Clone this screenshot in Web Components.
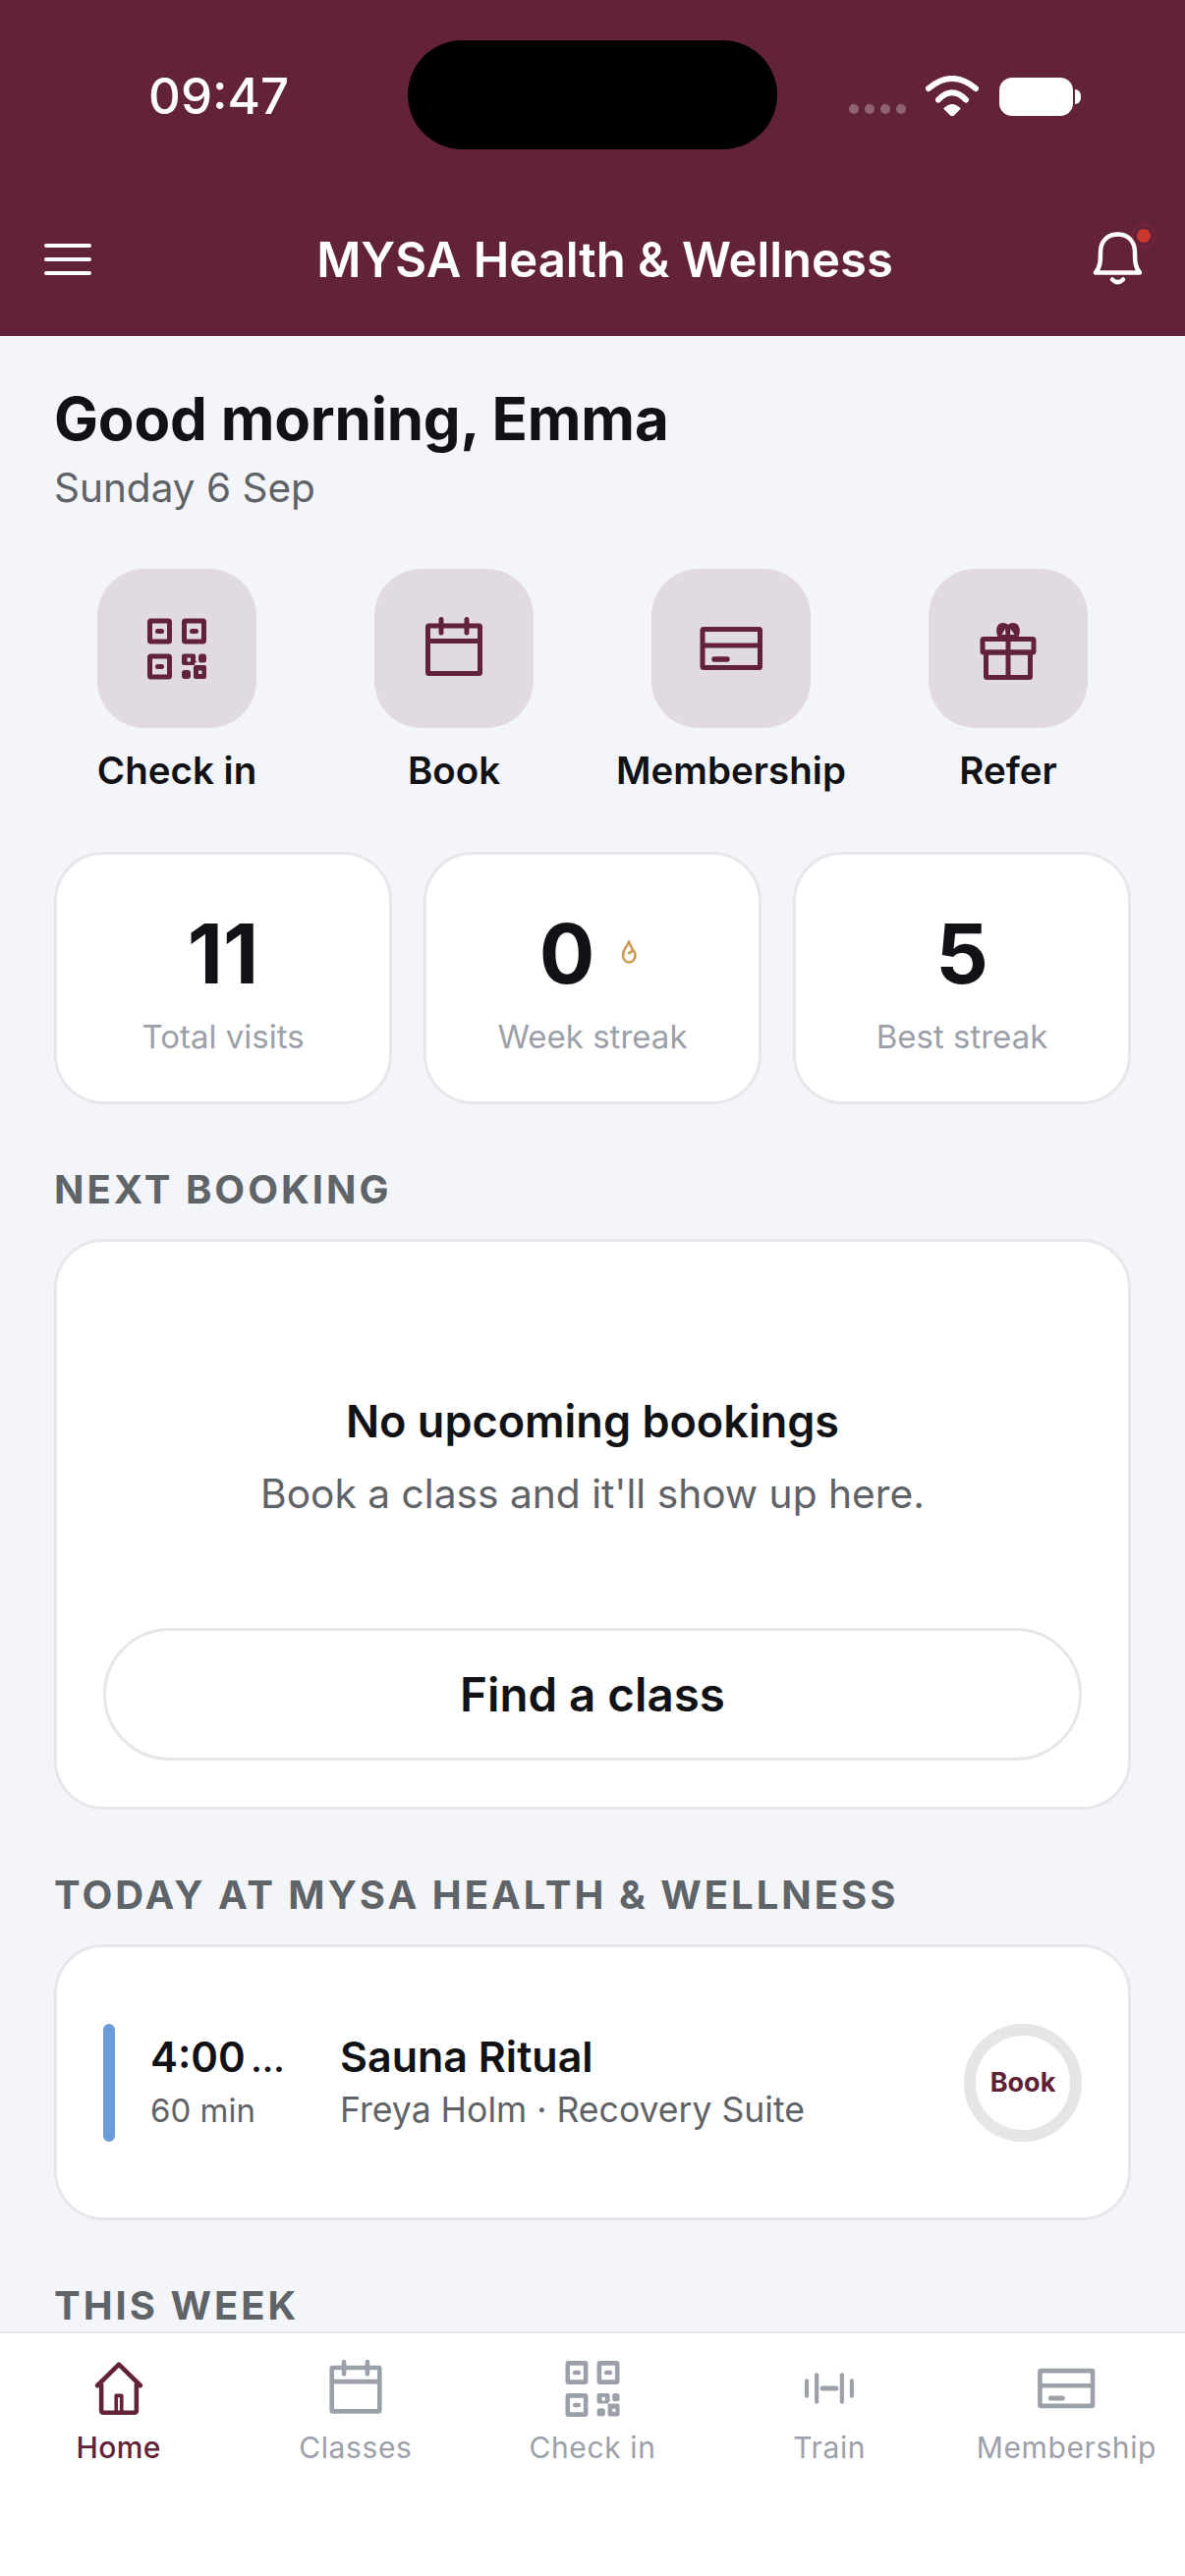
<!DOCTYPE html>
<html lang="en"><head><meta charset="utf-8"><title>MYSA Health & Wellness</title>
<style>
html,body{margin:0;padding:0;background:#F4F5F9}
body{font-family:Inter,"Liberation Sans",sans-serif;color:#111216;-webkit-font-smoothing:antialiased}
</style></head><body>
<mysa-app>
  <mysa-header slot="header" title="MYSA Health &amp; Wellness"></mysa-header>
  <mysa-greeting name="Good morning, Emma" date="Sunday 6 Sep"></mysa-greeting>
  <mysa-actions>
    <mysa-action icon="qr">Check in</mysa-action>
    <mysa-action icon="calendar">Book</mysa-action>
    <mysa-action icon="card">Membership</mysa-action>
    <mysa-action icon="gift">Refer</mysa-action>
  </mysa-actions>
  <mysa-stats>
    <mysa-stat value="11" label="Total visits"></mysa-stat>
    <mysa-stat value="0" label="Week streak" flame></mysa-stat>
    <mysa-stat value="5" label="Best streak"></mysa-stat>
  </mysa-stats>
  <mysa-section>NEXT BOOKING</mysa-section>
  <mysa-empty heading="No upcoming bookings" text="Book a class and it'll show up here." action="Find a class"></mysa-empty>
  <mysa-section>TODAY AT MYSA HEALTH &amp; WELLNESS</mysa-section>
  <mysa-class time="4:00 …" duration="60 min" name="Sauna Ritual" detail="Freya Holm · Recovery Suite" action="Book"></mysa-class>
  <mysa-section>THIS WEEK</mysa-section>
  <mysa-tabs slot="footer">
    <mysa-tab icon="home" active>Home</mysa-tab>
    <mysa-tab icon="calendar">Classes</mysa-tab>
    <mysa-tab icon="qr">Check in</mysa-tab>
    <mysa-tab icon="dumbbell">Train</mysa-tab>
    <mysa-tab icon="card">Membership</mysa-tab>
  </mysa-tabs>
</mysa-app>
<script>
const ICONS={
qr:`<g fill="none" stroke="currentColor" stroke-width="5" stroke-linejoin="round"><rect x="8.5" y="8" width="20" height="21" rx="1"/><rect x="43.5" y="8" width="20" height="21" rx="1"/><rect x="8.5" y="44" width="20" height="21" rx="1"/></g><g fill="currentColor"><rect x="14" y="16" width="9" height="5" rx="2.5"/><rect x="49" y="16" width="9" height="5" rx="2.5"/><rect x="14" y="52" width="9" height="5" rx="2.5"/><path fill-rule="evenodd" d="M43 41.5h10a2 2 0 0 1 2 2V48a2 2 0 0 0 2 2h-1a2 2 0 0 0-2 2v1H43a2 2 0 0 1-2-2V43.5a2 2 0 0 1 2-2zM46.500 45.500v4h3.500v-4z"/><rect x="58" y="41.500" width="8" height="9" rx="3"/><rect x="41" y="58" width="9" height="9" rx="3"/><path fill-rule="evenodd" d="M55 53h9a2 2 0 0 1 2 2v10a2 2 0 0 1-2 2H55a2 2 0 0 1-2-2V55a2 2 0 0 1 2-2zM58 58.500v3.500h3.500v-3.500z"/></g>`,
calendar:`<g fill="none" stroke="currentColor" stroke-width="5" stroke-linecap="round" stroke-linejoin="round"><rect x="9.500" y="13" width="53" height="48.500" rx="1"/><path d="M8 28.500H64" stroke-linecap="butt"/><path d="M23 6.500V20M49 6.500V20"/></g>`,
card:`<g fill="none" stroke="currentColor" stroke-width="5" stroke-linejoin="round"><rect x="7" y="16.500" width="58.500" height="39" rx="1"/><path d="M7 33H65.500"/><path d="M19 47H32" stroke-linecap="round" stroke-width="5.500"/></g>`,
gift:`<g fill="none" stroke="currentColor" stroke-width="5" stroke-linejoin="round"><rect x="10" y="26.500" width="52" height="13.500" rx="1"/><rect x="13.500" y="40" width="45" height="25.500" rx="1"/><path d="M36 26.500V65.500"/></g><path fill="currentColor" fill-rule="evenodd" d="M26 25C23 20 23 10 31 10 33.500 10 35 11 36 12 37 11 38.500 10 41 10 49 10 49 20 46 25ZM33 16L29.500 22H33.500ZM38.500 16L38 22H42.500Z"/>`,
home:`<g fill="none" stroke="currentColor" stroke-width="5" stroke-linecap="round" stroke-linejoin="round"><path d="M12 33L36 9.500 60 33"/><path d="M16.500 32V61a2 2 0 0 0 2 2H53.500a2 2 0 0 0 2-2V32"/><path d="M33 63V44H39V63" stroke-width="4"/></g>`,
dumbbell:`<g fill="none" stroke="currentColor" stroke-width="4.500" stroke-linecap="round"><path d="M11 27.500V44.500M22 21V51M50 21V51M61 27.500V44.500"/><path d="M28.500 36H43.500" stroke-width="5.500"/></g>`
};
function def(tag,css,html,init){
  customElements.define(tag,class extends HTMLElement{
    constructor(){super();this.attachShadow({mode:'open'})}
    connectedCallback(){
      const a=n=>this.getAttribute(n)||'';
      this.shadowRoot.innerHTML=`<style>${css}</style>`+html(a,this);
      if(init)init(this);
    }
  });
}
def('mysa-icon',':host{display:block;width:var(--s,72px);height:var(--s,72px)}svg{display:block;width:100%;height:100%}',
  a=>`<svg viewBox="0 0 72 72" aria-hidden="true">${ICONS[a('name')]||''}</svg>`);
def('mysa-app',`:host{display:flex;flex-direction:column;width:1206px;height:2622px;overflow:hidden;background:#F4F5F9}
  main{flex:1;min-height:0;overflow:hidden;padding:50px 55px 0;display:flex;flex-direction:column}
  ::slotted(*){flex:none}`,
  ()=>`<slot name="header"></slot><main><slot></slot></main><slot name="footer"></slot>`);
def('mysa-header',`:host{display:block;background:#62223A;color:#fff;height:342px;flex:none}
  .status{display:grid;grid-template-columns:415px 376px 1fr;height:190px;padding-top:41px;box-sizing:border-box}
  .time{padding-left:151px;font-weight:500;font-size:51px;line-height:114px;height:111px}
  .island{height:111px;background:#000;border-radius:56px}
  .sys{display:flex;align-items:flex-end;height:77px;padding-left:73px}
  .dots{display:flex;gap:6px;margin-bottom:2px}.dots i{width:10px;height:10px;border-radius:50%;background:rgba(255,255,255,.3)}
  .wifi{display:block;margin-left:20px}
  .batt{width:75px;height:39px;border-radius:13px;background:#fff;margin-left:21px}
  .cap{width:6px;height:15px;background:#fff;border-radius:0 8px 8px 0;margin:0 0 12px 2px}
  .bar{display:flex;align-items:center;height:148px;padding:0 43px 0 45px}
  .menu{display:flex;flex-direction:column;gap:10px;width:48px}.menu i{height:4px;background:#fff;border-radius:2px}
  h1{flex:1;margin:0;text-align:center;font-size:49px;font-weight:600;line-height:60px;padding:2px 0 0 26px}
  .bell{position:relative;width:51px;height:56px;flex:none}
  .bell svg{display:block}
  .dot{position:absolute;left:40px;top:-8px;width:24px;height:24px;box-sizing:border-box;border-radius:50%;border:1px solid rgba(214,52,44,.35);display:grid;place-items:center}
  .dot i{width:14px;height:14px;border-radius:50%;background:#CC3730}`,
  a=>`<div class="status"><div class="time">09:47</div><div class="island"></div><div class="sys">
    <div class="dots"><i></i><i></i><i></i><i></i></div>
    <svg class="wifi" width="54" height="41" viewBox="0 0 54 41"><g fill="none" stroke="#fff" stroke-width="6" stroke-linecap="round"><path d="M3 13Q27 -7 51 13"/><path d="M13 24.500Q27 10 41 24.500"/></g><path d="M27 41L19.500 33.500Q27 26.500 34.500 33.500Z" fill="#fff" stroke="#fff" stroke-width="2" stroke-linejoin="round"/></svg>
    <div class="batt"></div><div class="cap"></div></div></div>
    <div class="bar"><div class="menu"><i></i><i></i><i></i></div><h1>${a('title').replace(/&/g,'&amp;')}</h1>
    <div class="bell"><svg width="51" height="56" viewBox="0 0 51 56" fill="none" stroke="#fff" stroke-linecap="round" stroke-linejoin="round" stroke-width="4.500"><path d="M3 41.500H48C43 36 43 28 43 21 43 9 35.500 2.500 25.500 2.500 15.500 2.500 8 9 8 21 8 28 8 36 3 41.500Z"/><path d="M20 48.500Q25.500 54 31 48.500"/></svg><span class="dot"><i></i></span></div></div>`);
def('mysa-greeting',`:host{display:block}
  h2{margin:0;font-size:60px;line-height:68px;font-weight:700;color:#111216;letter-spacing:-.2px}
  p{margin:15px 0 0;font-size:40.500px;line-height:44px;color:#5F6368}`,
  a=>`<h2>${a('name')}</h2><p>${a('date')}</p>`);
def('mysa-actions',`:host{display:grid;grid-template-columns:repeat(4,250px);gap:32px;margin-top:60px}`,()=>`<slot></slot>`);
def('mysa-action',`:host{display:flex;flex-direction:column;align-items:center;white-space:nowrap}
  .t{width:162px;height:162px;border-radius:48px;background:#E1DAE1;color:#62223A;display:grid;place-items:center}
  .l{margin-top:20px;font-size:38.500px;line-height:46px;font-weight:600;color:#111216}`,
  a=>`<div class="t"><mysa-icon name="${a('icon')}"></mysa-icon></div><div class="l"><slot></slot></div>`);
def('mysa-stats',`:host{display:grid;grid-template-columns:repeat(3,1fr);gap:32px;margin-top:60px}`,()=>`<slot></slot>`);
def('mysa-stat',`:host{display:flex;flex-direction:column;align-items:center;height:257px;box-sizing:border-box;padding-top:56px;background:#fff;border:3px solid #E6E7EA;border-radius:50px}
  .n{display:flex;align-items:center;font-size:84px;font-weight:700;line-height:90px;color:#111216}
  .n svg{margin-left:18px;margin-top:-3px}
  .l{margin-top:16px;font-size:33px;line-height:46px;color:#9CA0A8}`,
  (a,el)=>`<div class="n">${a('value')}${el.hasAttribute('flame')?`<svg width="34" height="28" viewBox="0 0 34 28" fill="none" stroke="#CF9B5A" stroke-width="2.600" stroke-linecap="round" stroke-linejoin="round"><path d="M17 2.500C16 7 11 9 11 17A6.300 7.500 0 0 0 23.500 17C23.500 14 22 11.500 20.500 10.500 20 13 18.500 14 17 14"/><path d="M17 2.500C18 6 20 8 20.500 10.500"/></svg>`:''}</div><div class="l">${a('label')}</div>`);
def('mysa-section',`:host{display:block;margin-top:62px;margin-bottom:25px;font-size:40px;line-height:50px;font-weight:700;letter-spacing:3px;color:#5F6468;white-space:nowrap}`,()=>`<slot></slot>`);
def('mysa-empty',`:host{display:flex;flex-direction:column;align-items:stretch;box-sizing:border-box;height:581px;padding:155px 47px 47px;background:#fff;border:3px solid #E6E7EA;border-radius:50px;text-align:center}
  h3{margin:0;font-size:45px;line-height:56px;font-weight:600;color:#111216}
  p{margin:20px 0 0;font-size:40.700px;line-height:52px;color:#5F6368}
  .b{margin-top:110px;height:135px;box-sizing:border-box;border:3px solid #E6E7EA;border-radius:68px;display:grid;place-items:center;font-size:47.500px;font-weight:600;color:#111216}`,
  a=>`<h3>${a('heading')}</h3><p>${a('text')}</p><div class="b">${a('action')}</div>`);
def('mysa-class',`:host{display:flex;align-items:center;box-sizing:border-box;height:281px;padding:0 47px;background:#fff;border:3px solid #E6E7EA;border-radius:50px}
  .bar{width:12px;height:120px;border-radius:6px;background:#6B9BD8;flex:none}
  .time{width:136px;margin-left:36px;flex:none}
  .t{font-size:42px;line-height:50px;font-weight:600;color:#111216;white-space:nowrap;word-spacing:-5px}
  .t span{font-size:36px}
  .d{margin-top:5px;font-size:33px;line-height:44px;color:#5F6368}
  .info{flex:1;min-width:0;margin-left:57px}
  .n{font-size:43px;line-height:50px;font-weight:600;color:#111216}
  .s{margin-top:7px;font-size:35.600px;line-height:46px;color:#5F6368;white-space:nowrap}
  .c{width:120px;height:120px;box-sizing:border-box;border:12px solid #E5E6E8;border-radius:50%;display:grid;place-items:center;font-size:27px;font-weight:700;color:#5F1F36;flex:none}`,
  a=>`<div class="bar"></div><div class="time"><div class="t">${a('time').replace('…','<span>…</span>')}</div><div class="d">${a('duration')}</div></div><div class="info"><div class="n">${a('name')}</div><div class="s">${a('detail')}</div></div><div class="c">${a('action')}</div>`);
def('mysa-tabs',`:host{display:flex;flex:none;height:249px;box-sizing:border-box;background:#fff;border-top:2px solid #E6E7EA;padding-top:20px}`,()=>`<slot></slot>`);
def('mysa-tab',`:host{flex:1 1 0;min-width:0;display:flex;flex-direction:column;align-items:center;color:#9CA0A8;--s:66px;white-space:nowrap}
  :host([active]){color:#62223A}
  .i{height:72px;display:grid;place-items:center}
  .l{margin-top:4px;font-size:30px;line-height:40px;letter-spacing:.6px}
  :host([active]) .l{font-weight:500;letter-spacing:.4px}`,
  a=>`<div class="i"><mysa-icon name="${a('icon')}"></mysa-icon></div><div class="l"><slot></slot></div>`);
</script>
</body></html>
